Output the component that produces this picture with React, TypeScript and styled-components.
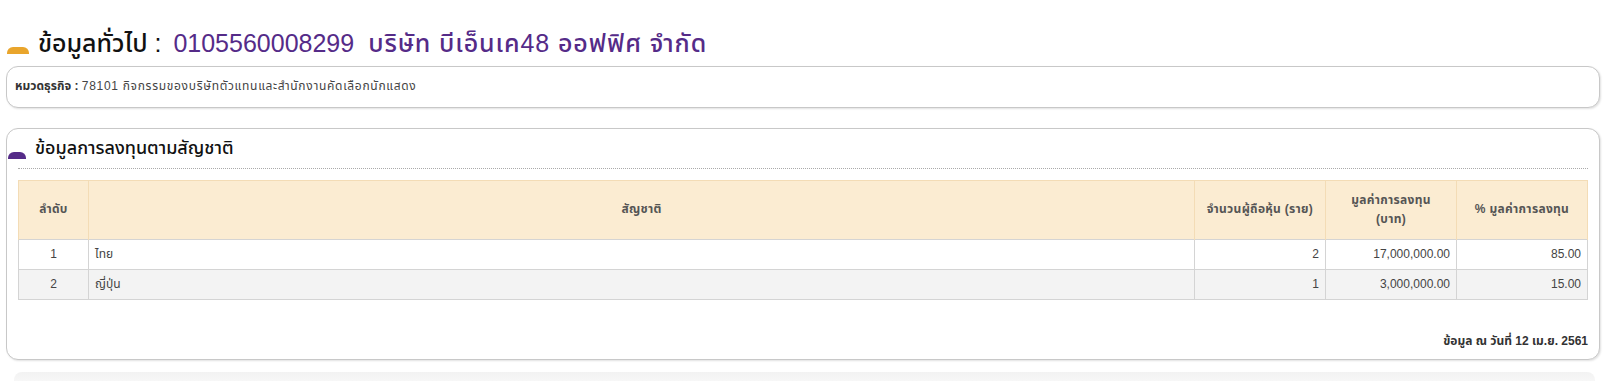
import React from "react";
import styled, { createGlobalStyle } from "styled-components";

const GlobalStyle = createGlobalStyle`
  html, body {
    margin: 0;
    padding: 0;
    background: #fff;
  }
  body {
    font-family: "Liberation Sans", "Noto Sans Thai", "Noto Sans", Tahoma, sans-serif;
    color: #333;
    font-size: 12px;
  }
`;

// Styled
const Page = styled.main`
  display: flex;
  flex-direction: column;
  padding: 28px 9px 0 6px;
  height: 381px;
  box-sizing: border-box;
  overflow: hidden;
`;
const Block = styled.section`
  display: flex;
  flex-direction: column;
  gap: 8px;
  margin-bottom: 20px;
`;
const Heading = styled.h1<{ $accent: string; $size: number }>`
  display: flex;
  align-items: flex-end;
  gap: 9px;
  margin: 0;
  font-size: ${({ $size }) => $size}px;
  font-weight: 500;
  color: #111;
  line-height: 1.2;
  &::before {
    content: "";
    display: block;
    flex: none;
    width: ${({ $size }) => ($size > 20 ? 22 : 18)}px;
    height: 7px;
    margin-left: 1px;
    margin-bottom: ${({ $size }) => ($size > 20 ? 4 : 1)}px;
    border-radius: 6px 6px 0 0;
    background: ${({ $accent }) => $accent};
  }
`;
const Highlight = styled.span`
  color: #552b88;
  margin-left: 12px;
  .code {
    font-weight: 400;
  }
  .name {
    margin-left: 14px;
    letter-spacing: 0.9px;
  }
`;
const Card = styled.div`
  border: 1px solid #c8c8c8;
  border-radius: 12px;
  box-shadow: 1px 1px 2px rgba(0, 0, 0, 0.12);
  background: #fff;
`;
const InfoCard = styled(Card)`
  padding: 10px 8px 12px;
  font-size: 12px;
  color: #444;
  b {
    color: #333;
  }
  span {
    letter-spacing: 0.7px;
  }
`;
const TableCard = styled(Card)`
  display: flex;
  flex-direction: column;
  padding: 9px 11px 9px 0;
`;
const SectionTitle = styled.div`
  padding-bottom: 8px;
  margin: 0 0 11px 11px;
  border-bottom: 1px dotted #aaa;
  h2 {
    margin: 0;
    margin-left: -11px;
  }
`;
const Table = styled.table`
  border-collapse: collapse;
  margin-left: 11px;
  width: calc(100% - 11px);
  font-size: 12px;
  color: #444;
  th {
    background: #fbecd2;
    color: #555;
    font-weight: 700;
    height: 58px;
    border: 1px solid #f3dcb6;
    border-bottom: 1px dotted #d9c29a;
    padding: 0 6px;
    vertical-align: middle;
    line-height: 19px;
    letter-spacing: 0.3px;
  }
  td {
    height: 29px;
    border: 1px solid #d4d4d4;
    padding: 0 6px;
  }
  tbody tr:nth-child(2) td {
    background: #f3f3f3;
  }
`;
const Cell = styled.td<{ $align?: string }>`
  text-align: ${({ $align }) => $align || "left"};
`;
const Footer = styled.div`
  text-align: right;
  font-weight: 700;
  font-size: 12px;
  color: #333;
  margin-top: 32px;
`;
const NextCard = styled.div`
  flex: none;
  height: 14px;
  margin: 12px 5px 0 8px;
  border-radius: 8px 8px 0 0;
  background: linear-gradient(#f2f2f2, #fafafa);
`;

const rows = [
  { no: 1, name: "ไทย", holders: 2, amount: "17,000,000.00", percent: "85.00" },
  { no: 2, name: "ญี่ปุ่น", holders: 1, amount: "3,000,000.00", percent: "15.00" },
];

const App = () => {
  return (
    <>
      <GlobalStyle />
      <Page>
        <Block>
          <Heading $accent="#e9a52c" $size={25}>
            <span>
              ข้อมูลทั่วไป :
              <Highlight>
                <span className="code">0105560008299</span>
                <span className="name">บริษัท บีเอ็นเค48 ออฟฟิศ จำกัด</span>
              </Highlight>
            </span>
          </Heading>
          <InfoCard>
            <b>หมวดธุรกิจ :</b> <span>78101 กิจกรรมของบริษัทตัวแทนและสำนักงานคัดเลือกนักแสดง</span>
          </InfoCard>
        </Block>
        <TableCard>
          <SectionTitle>
            <Heading as="h2" $accent="#552b88" $size={18}>
              <span>ข้อมูลการลงทุนตามสัญชาติ</span>
            </Heading>
          </SectionTitle>
          <Table>
            <colgroup>
              <col style={{ width: 70 }} />
              <col />
              <col style={{ width: 131 }} />
              <col style={{ width: 131 }} />
              <col style={{ width: 131 }} />
            </colgroup>
            <thead>
              <tr>
                <th>ลำดับ</th>
                <th>สัญชาติ</th>
                <th>จำนวนผู้ถือหุ้น (ราย)</th>
                <th>
                  มูลค่าการลงทุน
                  <br />
                  (บาท)
                </th>
                <th>% มูลค่าการลงทุน</th>
              </tr>
            </thead>
            <tbody>
              {rows.map((row) => (
                <tr key={row.no}>
                  <Cell $align="center">{row.no}</Cell>
                  <Cell>{row.name}</Cell>
                  <Cell $align="right">{row.holders}</Cell>
                  <Cell $align="right">{row.amount}</Cell>
                  <Cell $align="right">{row.percent}</Cell>
                </tr>
              ))}
            </tbody>
          </Table>
          <Footer>ข้อมูล ณ วันที่ 12 เม.ย. 2561</Footer>
        </TableCard>
        <NextCard />
      </Page>
    </>
  );
};

export default App;
